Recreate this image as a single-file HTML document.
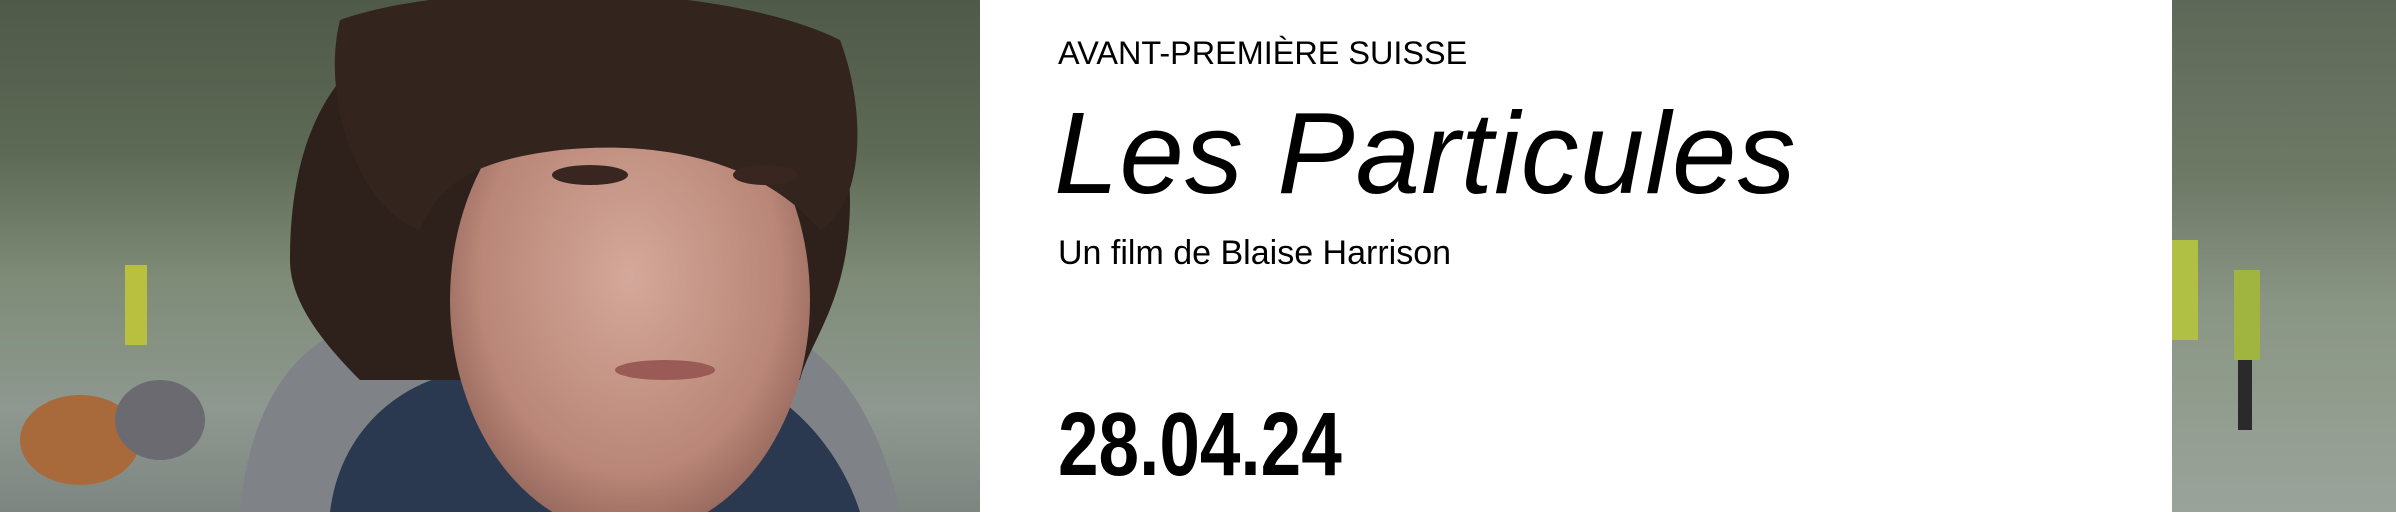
<!DOCTYPE html>
<html><head><meta charset="utf-8"><style>
*{margin:0;padding:0}
body{width:2396px;height:512px;overflow:hidden;position:relative;background:#fff;font-family:"Liberation Sans",sans-serif}
.l{position:absolute;left:0;top:0;width:980px;height:512px;overflow:hidden;background:linear-gradient(180deg,#4f5a48 0%,#5d6a55 30%,#7f8c78 55%,#8e9890 80%,#7d8580 100%)}
.r{position:absolute;left:2172px;top:0;width:224px;height:512px;background:linear-gradient(180deg,#5e6858 0%,#6e7a66 35%,#8a9684 60%,#9aa39a 100%)}
.t{position:absolute;color:#000;white-space:nowrap}
</style></head><body>
<div class="l">
<svg width="980" height="512" viewBox="0 0 980 512">
<defs>
<radialGradient id="sk" cx="50%" cy="45%" r="60%"><stop offset="0" stop-color="#d4a89a"/><stop offset="0.7" stop-color="#b98677"/><stop offset="1" stop-color="#8c5f55"/></radialGradient>
</defs>
<ellipse cx="80" cy="440" rx="60" ry="45" fill="#a86a3a"/>
<ellipse cx="160" cy="420" rx="45" ry="40" fill="#6a6a70"/>
<rect x="125" y="265" width="22" height="80" fill="#b9c040"/>
<path d="M240 512 C250 400 300 330 380 320 L740 320 C830 330 880 420 900 512 Z" fill="#7f8387"/>
<path d="M330 512 C340 430 400 380 470 370 L720 370 C790 390 840 450 860 512 Z" fill="#2a3850"/>
<path d="M290 260 C290 60 400 0 560 0 C740 0 850 80 850 200 C850 300 810 340 800 380 L360 380 C320 340 290 300 290 260 Z" fill="#2e211b"/>
<ellipse cx="630" cy="300" rx="180" ry="235" fill="url(#sk)"/>
<path d="M340 20 C450 -20 720 -20 840 40 C870 120 860 210 820 230 C760 160 660 140 560 150 C480 160 440 180 420 230 C360 210 320 100 340 20 Z" fill="#33251e"/>
<ellipse cx="590" cy="175" rx="38" ry="10" fill="#3a2620"/>
<ellipse cx="765" cy="175" rx="32" ry="10" fill="#3a2620"/>
<ellipse cx="665" cy="370" rx="50" ry="10" fill="#9a5a55"/>
</svg>
</div>
<div class="r">
<svg width="224" height="512"><rect x="0" y="240" width="26" height="100" fill="#b0c044"/><rect x="62" y="270" width="26" height="90" fill="#9fb540"/><rect x="66" y="360" width="14" height="70" fill="#2a2a2a"/></svg>
</div>
<div class="t" style="left:1058px;top:35px;font-size:32.4px">AVANT-PREMIÈRE SUISSE</div>
<div class="t" style="left:1054px;top:86px;font-size:116px;font-style:italic;letter-spacing:1px">Les Particules</div>
<div class="t" style="left:1058px;top:234px;font-size:34px">Un film de Blaise Harrison</div>
<div class="t" style="left:1058px;top:394px;font-size:90px;font-weight:bold;transform:scaleX(0.81);transform-origin:left">28.04.24</div>
</body></html>
